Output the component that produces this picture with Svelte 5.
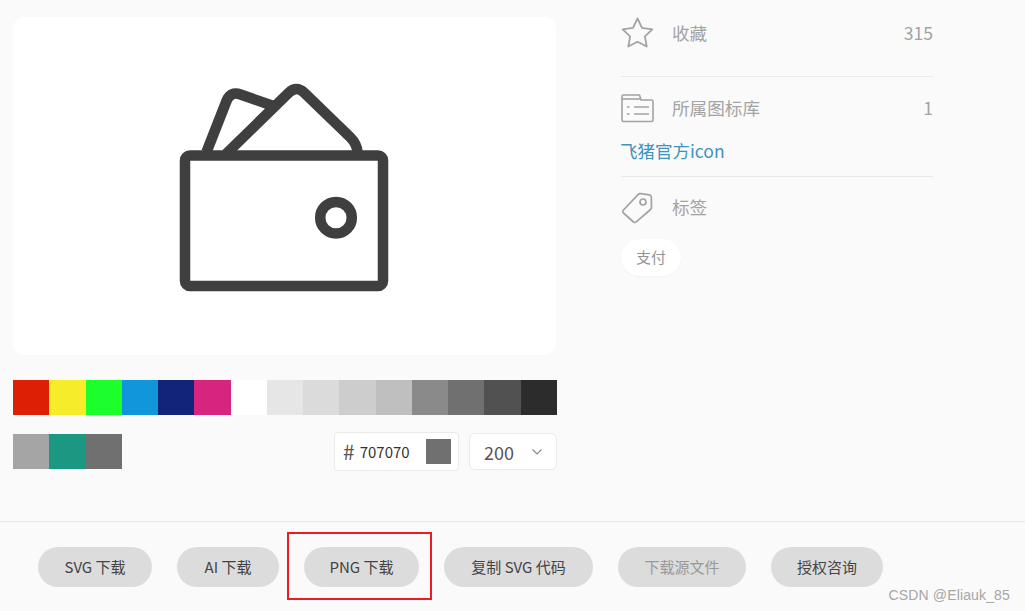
<script lang="ts">
  const topColors = ['#dd2005', '#f7ec2a', '#1cff2a', '#1296db', '#11247a', '#d6247f', '#ffffff', '#e6e6e6', '#dbdbdb', '#cdcdcd', '#bfbfbf', '#8a8a8a', '#707070', '#515151', '#2c2c2c'];
  const recent = ['#a5a5a5', '#1a9882', '#707070'];
  const buttons = [
    { label: 'SVG 下载', w: 114 },
    { label: 'AI 下载', w: 102 },
    { label: 'PNG 下载', w: 115 },
    { label: '复制 SVG 代码', w: 149 },
    { label: '下载源文件', w: 128, off: true },
    { label: '授权咨询', w: 112 },
  ];
</script>

<div class="page">
  <main class="main">
    <section class="left">
      <div class="card">
        <svg class="wallet" width="543" height="338" viewBox="13 17 543 338" fill="none" stroke="#3f3f3f" stroke-width="10.5" stroke-linejoin="round">
          <rect x="185" y="155.5" width="198" height="130.5" rx="5" />
          <circle cx="336" cy="217.7" r="15.8" />
          <path d="M206.5 152 L226.500 101 Q230.500 91 240.500 94.500 L272 105.500" />
          <path d="M226 154 L288.500 93 Q296.500 85 304.500 93 L350 137 Q357 144 357.500 152" />
        </svg>
      </div>
      <div class="swatches">
        {#each topColors as c}
          <span class="swatch" style="background: {c}"></span>
        {/each}
      </div>
      <div class="controls">
        <div class="recent">
          {#each recent as c}
            <span class="swatch" style="background: {c}"></span>
          {/each}
        </div>
        <div class="hex">
          <span class="hash">#</span>
          <span class="hexval">707070</span>
          <span class="hexcolor"></span>
        </div>
        <div class="size">
          <span>200</span>
          <svg width="12" height="8" viewBox="0 0 12 8" fill="none" stroke="#7d8a94" stroke-width="1.1"><path d="M1.5 1.5 L6 6 L10.5 1.5" /></svg>
        </div>
      </div>
    </section>

    <aside class="right">
      <div class="row first">
        <svg class="ico" width="34" height="32" viewBox="0 0 34 32" fill="none" stroke="#a3a3a3" stroke-width="1.8" stroke-linejoin="round">
          <path d="M16.500 1.500 L21 10.800 L31.300 12.300 L23.900 19.400 L25.700 29.500 L16.500 24.800 L7.300 29.500 L9.100 19.400 L1.700 12.300 L12 10.800 Z" />
        </svg>
        <span class="label">收藏</span>
        <span class="num">315</span>
      </div>
      <div class="line"></div>
      <div class="row lib">
        <svg class="ico" width="34" height="30" viewBox="0 0 34 30" fill="none" stroke="#a3a3a3" stroke-width="1.6" stroke-linejoin="round">
          <path d="M1 27 Q1 28.500 2.500 28.500 L30.500 28.500 Q32 28.500 32 27 L32 8.500 Q32 7 30.500 7 L20 7 L18.500 2 L2.500 2 Q1 2 1 3.500 Z" />
          <path d="M1 6 L19 6" />
          <path d="M6 14 L8.500 14 M6 21 L8.500 21 M13 14 L28 14 M13 21 L28 21" />
        </svg>
        <span class="label">所属图标库</span>
        <span class="num">1</span>
      </div>
      <a class="link" href="#top">飞猪官方icon</a>
      <div class="line"></div>
      <div class="row tagrow">
        <svg class="ico" width="34" height="32" viewBox="0 0 34 32" fill="none" stroke="#a3a3a3" stroke-width="1.7" stroke-linejoin="round">
          <path d="M2.500 18 Q1 19.500 2.500 21 L12.500 30 Q14 31 15.500 29.600 L29.500 17.500 Q30.500 16.500 30.500 15 L30.300 5 Q30.200 3 28.500 2.800 L19.500 1.600 Q18 1.500 17 2.600 Z" />
          <circle cx="22" cy="10" r="3" />
        </svg>
        <span class="label tagtext">标签</span>
      </div>
      <span class="pill">支付</span>
    </aside>
  </main>

  <footer class="footer">
    {#each buttons as b}
      <button class="btn" class:off={b.off} style="width: {b.w}px">{b.label}</button>
    {/each}
  </footer>

  <div class="mark"></div>
  <div class="csdn">CSDN @Eliauk_85</div>
</div>

<style>
  :global(body) {
    margin: 0;
    background: #fafafa;
  }

  .page {
    position: relative;
    width: 1025px;
    height: 611px;
    overflow: hidden;
    background: #fafafa;
    font-family: "Noto Sans CJK SC", "Open Sans", sans-serif;
  }

  .main {
    display: flex;
    height: 522px;
    box-sizing: border-box;
    padding: 17px 0 0 13px;
    border-bottom: 1px solid #e8e8e8;
  }

  .left {
    width: 544px;
  }

  .card {
    width: 543px;
    height: 338px;
    background: #fff;
    border-radius: 12px;
  }

  .wallet {
    display: block;
  }

  .swatches {
    display: flex;
    margin-top: 25px;
    height: 35px;
  }

  .swatch {
    flex: 1;
    height: 35px;
  }

  .controls {
    display: flex;
    align-items: center;
    margin-top: 17px;
    height: 39px;
  }

  .recent {
    display: flex;
    width: 109px;
  }

  .hex {
    display: flex;
    align-items: center;
    box-sizing: border-box;
    width: 125px;
    height: 39px;
    margin-left: 212px;
    padding: 0 7px 0 8px;
    background: #fff;
    border: 1px solid #eaeaea;
    border-radius: 4px;
    color: #333;
  }

  .hash {
    font-size: 21px;
    line-height: 1;
    color: #555;
    margin-right: 5px;
  }

  .hexval {
    font-size: 15px;
  }

  .hexcolor {
    width: 25px;
    height: 25px;
    margin-left: auto;
    background: #707070;
  }

  .size {
    display: flex;
    align-items: center;
    justify-content: space-between;
    box-sizing: border-box;
    width: 88px;
    height: 37px;
    margin-left: 10px;
    padding: 0 13px 0 14px;
    background: #fff;
    border: 1px solid #eaeaea;
    border-radius: 6px;
    font-size: 18px;
    color: #555;
  }

  .right {
    width: 312px;
    margin-left: 64px;
    display: flex;
    flex-direction: column;
    align-items: flex-start;
  }

  .row {
    display: flex;
    align-items: center;
    width: 100%;
    height: 32px;
  }

  .row.lib {
    margin-top: 15px;
  }

  .row.tagrow {
    margin-top: 15px;
  }

  .ico {
    flex: none;
    width: 34px;
  }

  .label {
    margin-left: 17px;
    padding-bottom: 2px;
    font-size: 17.6px;
    color: #a3a3a3;
  }

  .label.tagtext {
    padding-bottom: 4px;
  }

  .num {
    margin-left: auto;
    padding-bottom: 2px;
    font-size: 17.6px;
    color: #a3a3a3;
  }

  .line {
    width: 100%;
    height: 1px;
    background: #e8e8e8;
  }

  .first + .line {
    margin-top: 27px;
  }

  .link {
    margin-top: 14px;
    margin-bottom: 12px;
    margin-left: -1px;
    font-size: 17.5px;
    line-height: 26px;
    color: #3f93c0;
    text-decoration: none;
  }

  .pill {
    margin-top: 15px;
    width: 60px;
    height: 37px;
    line-height: 36px;
    text-align: center;
    font-size: 15px;
    color: #949494;
    background: #fff;
    border-radius: 19px;
    box-shadow: 0 1px 3px rgba(0, 0, 0, 0.03);
  }

  .footer {
    display: flex;
    gap: 25px;
    padding: 25px 0 0 38px;
  }

  .btn {
    height: 40px;
    padding: 0 0 2px;
    border: 0;
    border-radius: 20px;
    background: #dcdcdc;
    color: #444;
    font-family: inherit;
    font-size: 15px;
  }

  .btn.off {
    color: #999;
  }

  .mark {
    position: absolute;
    left: 287px;
    top: 532px;
    width: 141px;
    height: 64px;
    border: 2px solid #ed1c24;
  }

  .csdn {
    position: absolute;
    right: 15px;
    top: 586px;
    font-family: "Liberation Sans", sans-serif;
    font-size: 14px;
    letter-spacing: 0.15px;
    line-height: 18px;
    color: #a6a6a6;
  }
</style>
